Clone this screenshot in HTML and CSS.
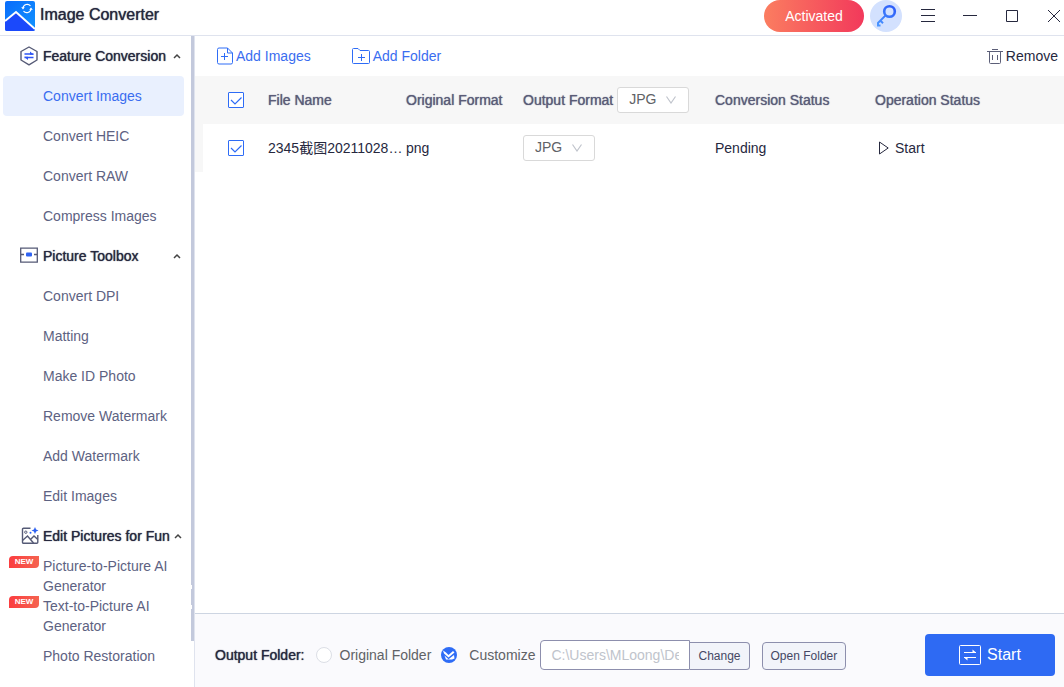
FILE: index.html
```
<!DOCTYPE html>
<html lang="en">
<head>
    <meta charset="UTF-8">
    <meta name="viewport" content="width=device-width, initial-scale=1.0">
    <title>Image Converter</title>
    <link rel="stylesheet" href="styles.css">
</head>
<body>
    <header class="titlebar">
        <svg class="logo" width="30" height="30" viewBox="0 0 30 30">
            <defs>
                <linearGradient id="sky" x1="0" y1="0" x2="1" y2="1">
                    <stop offset="0" stop-color="#0a6cfb"/>
                    <stop offset="1" stop-color="#1193ff"/>
                </linearGradient>
            </defs>
            <rect width="30" height="30" rx="2" fill="url(#sky)"/>
            <path d="M0 20 L11 11 L30 28 V28 a2 2 0 0 1 -2 2 H2 a2 2 0 0 1 -2 -2 Z" fill="#1b49fb"/>
            <path d="M0 20 L11 11 L30 28" fill="none" stroke="#fff" stroke-width="2"/>
            <path d="M18 7 a4.2 4.2 0 0 1 7.5 -2 M26 8 a4.2 4.2 0 0 1 -7.5 2" fill="none" stroke="#fff" stroke-width="1.2"/>
            <path d="M16.2 6.2 h3.6 l-1.8 2.4 Z M24.2 8.8 h3.6 l-1.8 -2.4 Z" fill="#fff"/>
        </svg>
        <h1>Image Converter</h1>
        <button class="activated">Activated</button>
        <button class="key" aria-label="License key">
            <svg width="32" height="32" viewBox="0 0 32 32" fill="none">
                <defs>
                    <linearGradient id="keyfill" gradientUnits="userSpaceOnUse" x1="8" y1="26" x2="25" y2="6">
                        <stop offset="0" stop-color="#4b97ff"/>
                        <stop offset="1" stop-color="#2b59f8"/>
                    </linearGradient>
                </defs>
                <circle cx="19.5" cy="11.5" r="5.3" stroke="url(#keyfill)" stroke-width="2.6"/>
                <path d="M15.6 15.4 L8 23 V25.5 H10.5 M10.5 20.8 L13 23.3" stroke="url(#keyfill)" stroke-width="2"/>
            </svg>
        </button>
        <div class="window-buttons">
            <button aria-label="Menu"><svg width="14" height="14"><path d="M0 0.5 H14 M0 6.5 H14 M0 12.5 H14"/></svg></button>
            <button aria-label="Minimize"><svg width="14" height="14"><path d="M0 6.5 H14"/></svg></button>
            <button aria-label="Maximize"><svg width="14" height="14"><path d="M1.5 1.5 H12.5 V12.5 H1.5 Z"/></svg></button>
            <button aria-label="Close"><svg width="14" height="14"><path d="M1 1 L13 13 M13 1 L1 13"/></svg></button>
        </div>
    </header>

    <div class="layout">
        <aside class="sidebar">
            <nav>
                <button class="group">
                    <svg width="18" height="20" viewBox="0 0 18 20" fill="none">
                        <path d="M9 1 L17 5.5 V14 L9 18.8 L1 14 V5.5 Z" stroke="#555a76" stroke-width="1.4" stroke-linejoin="round"/>
                        <path d="M4.5 8 H13.5 M4.5 11.5 H13.5" stroke="#2e55f5" stroke-width="1.7"/>
                        <path d="M10 5.5 L13.8 8.8 H10 Z M8 14 L4.2 10.7 H8 Z" fill="#2e55f5"/>
                    </svg>
                    Feature Conversion
                    <svg class="arrow" width="8" height="6"><path d="M1 5 L4 2 L7 5"/></svg>
                </button>
                <a class="active" href="#">Convert Images</a>
                <a href="#">Convert HEIC</a>
                <a href="#">Convert RAW</a>
                <a href="#">Compress Images</a>

                <button class="group">
                    <svg width="18" height="18" viewBox="0 0 18 18" fill="none">
                        <path d="M0.7 1.2 H17.3 V15.2 H0.7 Z" stroke="#555a76" stroke-width="1.3"/>
                        <path d="M1 7.5 H4 M14 7.5 H17" stroke="#555a76" stroke-width="1.6"/>
                        <rect x="6" y="5.5" width="6" height="4" rx="1" fill="#2e62f2"/>
                    </svg>
                    Picture Toolbox
                    <svg class="arrow" width="8" height="6"><path d="M1 5 L4 2 L7 5"/></svg>
                </button>
                <a href="#">Convert DPI</a>
                <a href="#">Matting</a>
                <a href="#">Make ID Photo</a>
                <a href="#">Remove Watermark</a>
                <a href="#">Add Watermark</a>
                <a href="#">Edit Images</a>

                <button class="group">
                    <svg width="18" height="18" viewBox="0 0 18 18" fill="none">
                        <path d="M9.5 1.2 H2.5 a1 1 0 0 0 -1 1 V15.2 a1 1 0 0 0 1 1 H15.8 a1 1 0 0 0 1 -1 V8" stroke="#555a76" stroke-width="1.4"/>
                        <path d="M1.5 13.5 L6.5 9 L12.5 16 M9.5 12.5 L13 9 L16.8 12.5" stroke="#555a76" stroke-width="1.4"/>
                        <circle cx="4.8" cy="5.2" r="1.2" stroke="#555a76"/>
                        <path d="M14 0 L15.1 2.4 L17.5 3.5 L15.1 4.6 L14 7 L12.9 4.6 L10.5 3.5 L12.9 2.4 Z" fill="#2e62f2"/>
                        <circle cx="9.5" cy="5.8" r="1" fill="#2e62f2"/>
                    </svg>
                    Edit Pictures for Fun
                    <svg class="arrow" width="8" height="6"><path d="M1 5 L4 2 L7 5"/></svg>
                </button>
                <a class="long" href="#"><span class="new">NEW</span>Picture-to-Picture AI Generator</a>
                <a class="long" href="#"><span class="new">NEW</span>Text-to-Picture AI Generator</a>
                <a href="#">Photo Restoration</a>
            </nav>
            <div class="scrollbar"></div>
        </aside>

        <main>
            <div class="toolbar">
                <button class="tool">
                    <svg width="16" height="18" viewBox="0 0 16 18" fill="none" stroke="#2e6cf6">
                        <path d="M10.5 1 H2 a1.5 1.5 0 0 0 -1.5 1.5 V15.5 a1.5 1.5 0 0 0 1.5 1.5 H14 a1.5 1.5 0 0 0 1.5 -1.5 V6 Z M10.5 1 V6 H15.5"/>
                        <path d="M7.5 6 V13 M4 9.5 H11"/>
                    </svg>
                    Add Images
                </button>
                <button class="tool">
                    <svg width="18" height="18" viewBox="0 0 18 18" fill="none" stroke="#2e6cf6">
                        <path d="M0.5 15.5 V2.5 a1 1 0 0 1 1 -1 H6 L8 3.5 H16.5 a1 1 0 0 1 1 1 V15.5 a1 1 0 0 1 -1 1 H1.5 a1 1 0 0 1 -1 -1 Z"/>
                        <path d="M9.5 7 V14 M6 10.5 H13"/>
                    </svg>
                    Add Folder
                </button>
                <button class="tool remove">
                    <svg width="16" height="16" viewBox="0 0 16 16" fill="none" stroke="#5c5f78">
                        <path d="M0 3.5 H16 M5 1.5 H11 M2.5 3.5 V14.5 a1 1 0 0 0 1 1 H12.5 a1 1 0 0 0 1 -1 V3.5 M5.5 7 V12 M10.5 7 V12"/>
                    </svg>
                    Remove
                </button>
            </div>

            <table class="files">
                <thead>
                    <tr>
                        <th class="col-check"><input type="checkbox" aria-label="Select all" checked></th>
                        <th class="col-name">File Name</th>
                        <th class="col-original">Original Format</th>
                        <th class="col-output">
                            <div class="format-head">
                                <label for="format-all">Output Format</label>
                                <select id="format-all"><option>JPG</option></select>
                            </div>
                        </th>
                        <th class="col-status">Conversion Status</th>
                        <th>Operation Status</th>
                    </tr>
                </thead>
                <tbody>
                    <tr>
                        <td class="col-check"><input type="checkbox" aria-label="Select file" checked></td>
                        <td>2345截图20211028…</td>
                        <td>png</td>
                        <td><select aria-label="Output format"><option>JPG</option></select></td>
                        <td>Pending</td>
                        <td>
                            <button class="row-start">
                                <svg width="10" height="14" fill="none" stroke="#26283e"><path d="M0.5 1 L9.2 7 L0.5 13 Z"/></svg>
                                Start
                            </button>
                        </td>
                    </tr>
                </tbody>
            </table>

            <footer class="output">
                <b class="output-title">Output Folder:</b>
                <label class="original"><input type="radio" name="folder">Original Folder</label>
                <label class="customize"><input type="radio" name="folder" checked>Customize</label>
                <div class="path">
                    <input type="text" aria-label="Output path" value="C:\Users\MLoong\De" readonly>
                    <button class="small change">Change</button>
                    <button class="small">Open Folder</button>
                </div>
                <button class="start">
                    <svg width="22" height="20" viewBox="0 0 22 20" fill="none" stroke="#fff">
                        <rect x="0.5" y="0.5" width="21" height="19" rx="1"/>
                        <path d="M5 7.5 H17 M5 12.5 H17"/>
                        <path d="M17 7.5 L13.5 4.5 V7.5 Z M5 12.5 L8.5 15.5 V12.5 Z" fill="#fff" stroke="none"/>
                    </svg>
                    Start
                </button>
            </footer>
        </main>
    </div>
</body>
</html>
```
FILE: styles.css
```
/* Global Styles */
* {
    box-sizing: border-box;
}
body {
    margin: 0;
    min-height: 100vh;
    display: flex;
    flex-direction: column;
    font-family: "Liberation Sans", "Noto Sans CJK SC", sans-serif;
    font-size: 14px;
    line-height: 20px;
    color: #26283e;
    background: #fff;
}
button, input, select {
    font: inherit;
    color: inherit;
    margin: 0;
}
button {
    border: none;
    padding: 0;
    background: none;
    cursor: pointer;
}
svg {
    display: block;
    flex: none;
}

/* Title Bar */
.titlebar {
    display: flex;
    align-items: center;
    padding: 0 3px 3px 5px;
    border-bottom: 1px solid #dfe3ee;
}
h1 {
    margin: 0 auto 0 5px;
    padding-bottom: 2px;
    font-size: 16px;
    font-weight: normal;
    text-shadow: 0 0 1px #26283e;
}
.activated {
    width: 100px;
    height: 32px;
    border-radius: 16px;
    color: #fff;
    background: linear-gradient(to right, #fb7d60, #f2395b);
}
.key {
    margin: 0 19px 0 6px;
    border-radius: 50%;
    background: #d3e1fe;
}
.window-buttons {
    display: flex;
    gap: 28px;
}
.window-buttons path {
    fill: none;
    stroke: #26283e;
}

/* Sidebar */
.layout {
    flex: 1;
    display: flex;
}
.sidebar {
    flex: none;
    width: 195px;
    display: flex;
    border-right: 1px solid #dfe3ee;
}
nav {
    flex: 1;
    min-width: 0;
    padding: 0 7px 0 3px;
}
nav a {
    display: block;
    padding: 10px 0 10px 40px;
    border-radius: 4px;
    color: #5d6282;
    text-decoration: none;
}
nav a.active {
    color: #3a6df0;
    background: #e9f0fe;
}
nav a.long {
    position: relative;
    padding: 0 0 0 40px;
}
.group {
    display: flex;
    align-items: center;
    gap: 5px;
    width: 100%;
    height: 40px;
    padding: 0 3px 0 17px;
    text-align: left;
    white-space: nowrap;
    text-shadow: 0 0 1px #26283e;
}
.group .arrow {
    margin-left: auto;
    fill: none;
    stroke: #444;
    stroke-width: 1.5;
}
.group:has(+ .long) {
    gap: 4px;
    padding-left: 18px;
}
.new {
    position: absolute;
    left: 6px;
    top: 0;
    width: 30px;
    border-radius: 4px 0 4px 0;
    font-size: 8px;
    font-weight: bold;
    line-height: 12px;
    text-align: center;
    color: #fff;
    background: linear-gradient(to right, #fb3d3f, #f56350);
}
.scrollbar {
    flex: none;
    position: relative;
    width: 3px;
    height: 93%;
    background: #c3c9dc;
}
/* Grip marks */
.scrollbar::after {
    content: "";
    position: absolute;
    left: 0;
    bottom: 32px;
    width: 1px;
    height: 16px;
    border: solid #fff;
    border-width: 4px 0;
}

/* Toolbar */
main {
    flex: 1;
    min-width: 0;
    display: flex;
    flex-direction: column;
}
.toolbar {
    display: flex;
    gap: 41px;
    height: 40px;
    padding: 0 6px 0 22px;
}
.tool {
    display: flex;
    align-items: center;
    gap: 3px;
    color: #3a6df0;
}
.tool.remove {
    margin-left: auto;
    color: #26283e;
}

/* File Table */
.files {
    width: 100%;
    table-layout: fixed;
    border-spacing: 0;
}
th, td {
    height: 48px;
    padding: 0;
    text-align: left;
    white-space: nowrap;
}
th {
    font-weight: normal;
    color: #5a5c78;
    text-shadow: 0 0 1px #5a5c78;
    background: #f7f7f7;
}
.col-check {
    width: 73px;
    padding-left: 25px;
    border-left: 8px solid #f7f7f7;
}
.col-name {
    width: 138px;
}
.col-original {
    width: 117px;
}
.col-output {
    width: 192px;
}
.col-status {
    width: 160px;
}
.format-head {
    display: flex;
    align-items: center;
    gap: 4px;
}
input[type="checkbox"] {
    display: block;
    appearance: none;
    width: 16px;
    height: 16px;
    border: 1px solid #2e6cf6;
    border-radius: 1px;
    background: #fff;
}
input[type="checkbox"]:checked {
    background: #fff url("data:image/svg+xml,%3Csvg xmlns='http://www.w3.org/2000/svg' width='14' height='14'%3E%3Cpath d='M2 7 L6 11 L12.5 4.5' fill='none' stroke='%232e6cf6' stroke-width='1.2'/%3E%3C/svg%3E") center no-repeat;
}
select {
    display: block;
    appearance: none;
    width: 72px;
    height: 26px;
    padding: 0 0 2px 11px;
    border: 1px solid #d9d9d9;
    border-radius: 3px;
    color: #606266;
    background: #fff url("data:image/svg+xml,%3Csvg xmlns='http://www.w3.org/2000/svg' width='10' height='8'%3E%3Cpath d='M0.5 0.5 L5 7 L9.5 0.5' fill='none' stroke='%23c0c4cc' stroke-width='1.2'/%3E%3C/svg%3E") right 12px center no-repeat;
}
.row-start {
    display: flex;
    align-items: center;
    gap: 6px;
    padding-left: 4px;
}

/* Output Bar */
.output {
    display: flex;
    align-items: center;
    margin-top: auto;
    padding: 20px 9px 11px 20px;
    border-top: 1px solid #cdd5e2;
    background: #fafafd;
}
.output-title {
    font-weight: normal;
    text-shadow: 0 0 1px #26283e;
}
.output label {
    display: flex;
    align-items: center;
    color: #606266;
}
.output .original {
    gap: 8px;
    margin: 0 10px 0 11px;
}
.output .customize {
    gap: 12px;
}
input[type="radio"] {
    appearance: none;
    width: 16px;
    height: 16px;
    border: 1px solid #dcdfe6;
    border-radius: 50%;
    background: #fff;
}
input[type="radio"]:checked {
    border: none;
    background: #2e6cf6 url("data:image/svg+xml,%3Csvg xmlns='http://www.w3.org/2000/svg' width='16' height='16'%3E%3Cpath d='M2 3.5 L5 5.5 L7.5 8 L12 4 L13.5 5.5 L7.5 10.5 L3 6.5 Z' fill='%23fff'/%3E%3Cpath d='M3.5 8.5 L7.5 12.3 L13 8 L13.5 11.5 L11 12.5 L5 12.5 Z' fill='%23fff'/%3E%3C/svg%3E") center no-repeat;
}
.path {
    display: flex;
    align-items: flex-end;
    margin: 0 auto 0 5px;
}
.path input {
    width: 150px;
    height: 30px;
    padding: 0 10px;
    border: 1px solid #8d8fad;
    border-radius: 4px 0 0 4px;
    color: #c0c4cc;
    background: #fff;
}
.small {
    height: 28px;
    padding: 0 8px;
    border: 1px solid #8d8fad;
    border-radius: 4px;
    font-size: 12px;
    color: #454864;
    background: #f2f4fa;
}
.change {
    margin-right: 12px;
    border-left: none;
    border-radius: 0 4px 4px 0;
}
.start {
    display: flex;
    align-items: center;
    justify-content: center;
    gap: 6px;
    width: 130px;
    height: 42px;
    border-radius: 4px;
    font-size: 16px;
    color: #fff;
    background: #2e6af3;
}
```
